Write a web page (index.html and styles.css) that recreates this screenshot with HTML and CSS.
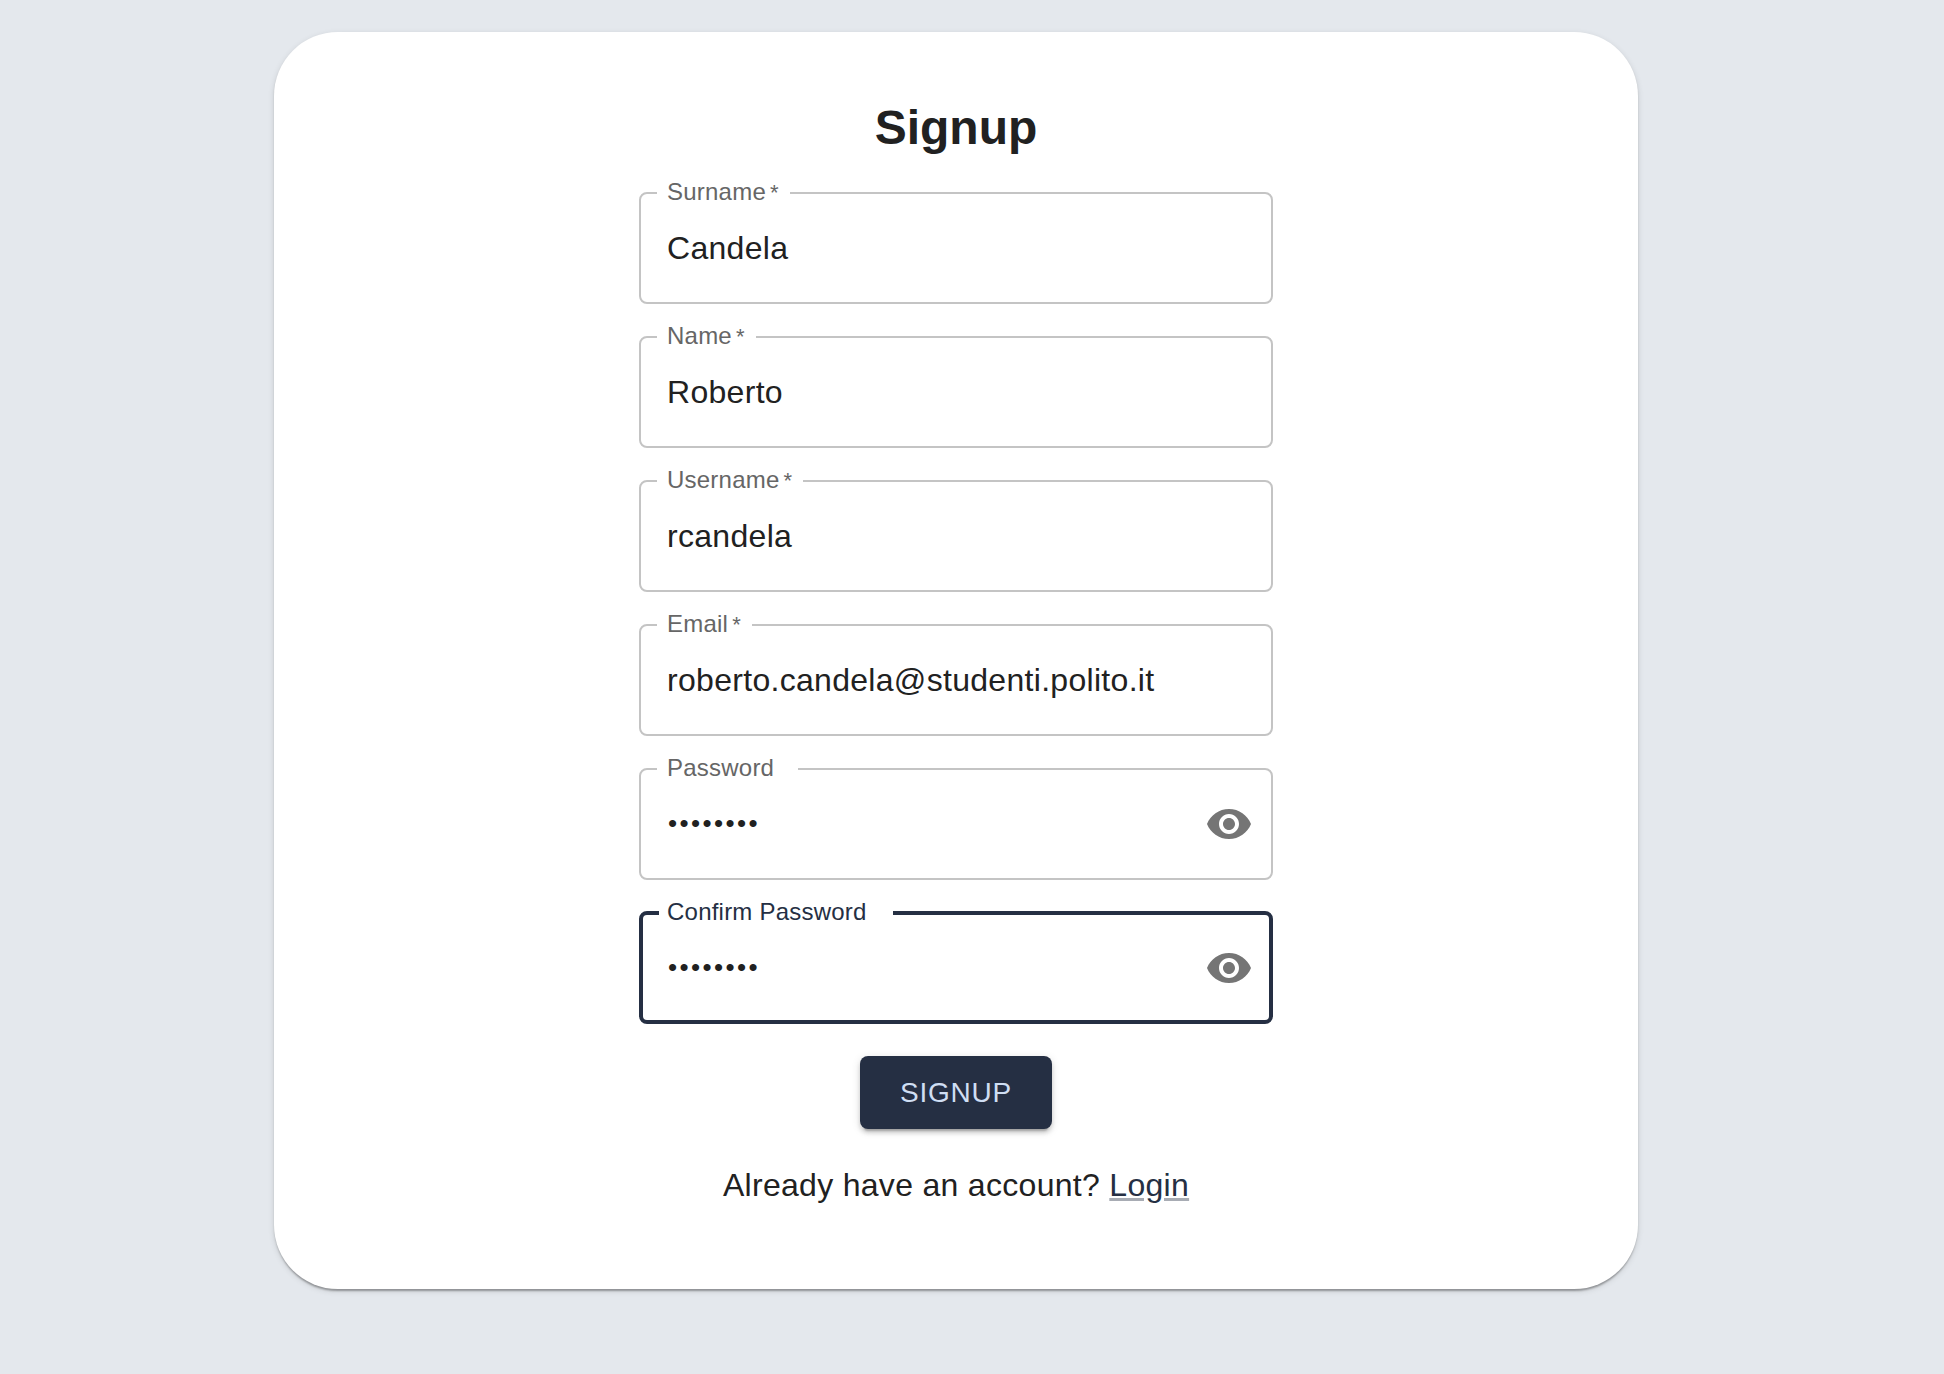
FILE: index.html
```html
<!DOCTYPE html>
<html lang="en">
<head>
<meta charset="utf-8">
<title>Signup</title>
<link rel="stylesheet" href="styles.css">
</head>
<body>
<main class="card">
  <h1 class="title">Signup</h1>
  <form class="form">
    <fieldset class="field field-surname">
      <legend class="label">Surname<span class="star">*</span></legend>
      <input class="input" type="text" value="Candela" aria-label="Surname">
    </fieldset>
    <fieldset class="field field-name">
      <legend class="label">Name<span class="star">*</span></legend>
      <input class="input" type="text" value="Roberto" aria-label="Name">
    </fieldset>
    <fieldset class="field field-username">
      <legend class="label">Username<span class="star">*</span></legend>
      <input class="input" type="text" value="rcandela" aria-label="Username">
    </fieldset>
    <fieldset class="field field-email">
      <legend class="label">Email<span class="star">*</span></legend>
      <input class="input" type="text" value="roberto.candela@studenti.polito.it" aria-label="Email">
    </fieldset>
    <fieldset class="field field-password">
      <legend class="label">Password</legend>
      <div class="row">
        <input class="input secret" type="password" value="password" aria-label="Password">
        <svg class="eye" viewBox="0 0 24 24"><path d="M12 4.5C7 4.5 2.73 7.61 1 12c1.73 4.39 6 7.5 11 7.5s9.27-3.11 11-7.5c-1.73-4.39-6-7.5-11-7.5zM12 17c-2.76 0-5-2.24-5-5s2.24-5 5-5 5 2.24 5 5-2.24 5-5 5zm0-8c-1.66 0-3 1.34-3 3s1.34 3 3 3 3-1.34 3-3-1.34-3-3-3z"/></svg>
      </div>
    </fieldset>
    <fieldset class="field field-confirm focused">
      <legend class="label">Confirm Password</legend>
      <div class="row">
        <input class="input secret" type="password" value="password" aria-label="Confirm Password">
        <svg class="eye" viewBox="0 0 24 24"><path d="M12 4.5C7 4.5 2.73 7.61 1 12c1.73 4.39 6 7.5 11 7.5s9.27-3.11 11-7.5c-1.73-4.39-6-7.5-11-7.5zM12 17c-2.76 0-5-2.24-5-5s2.24-5 5-5 5 2.24 5 5-2.24 5-5 5zm0-8c-1.66 0-3 1.34-3 3s1.34 3 3 3 3-1.34 3-3-1.34-3-3-3z"/></svg>
      </div>
    </fieldset>
  </form>
  <button class="submit" type="button">SIGNUP</button>
  <p class="login">Already have an account? <a class="link" href="#">Login</a></p>
</main>
</body>
</html>
```
FILE: styles.css
```css
* { box-sizing: border-box; }

body {
  margin: 0;
  min-height: 1374px;
  padding: 32px 32px 0 0;
  display: flex;
  justify-content: center;
  align-items: flex-start;
  background: #e4e8ed;
  color: #212121;
  font-family: "Liberation Sans", Arial, sans-serif;
}

.card {
  width: 1364px;
  height: 1257px;
  padding-top: 64px;
  display: flex;
  flex-direction: column;
  align-items: center;
  background: #fff;
  border-radius: 64px;
  box-shadow: 0 4px 2px -2px rgba(0, 0, 0, .2), 0 2px 2px 0 rgba(0, 0, 0, .14), 0 2px 6px 0 rgba(0, 0, 0, .12);
}

.title {
  margin: 0 0 21px;
  font-size: 48px;
  line-height: 64px;
}

.form {
  width: 634px;
  display: flex;
  flex-direction: column;
  gap: 21px;
}

/* The legend is 24px tall, so the box edge starts 11px below the fieldset top. */
.field {
  margin: 0;
  min-width: 0;
  height: 123px;
  padding: 0 18px 0 16px;
  border: 2px solid #c4c4c4;
  border-radius: 8px;
}

.label {
  height: 24px;
  padding: 0 0 2px 10px;
  color: #666;
  font-size: 24px;
  line-height: 22px;
  letter-spacing: .225px;
  white-space: nowrap;
}

.star {
  margin-left: 4px;
  font-size: 22px;
}

.field-surname .label { width: 133px; }
.field-name .label { width: 99px; }
.field-username .label { width: 146px; }
.field-email .label { width: 95px; }
.field-password .label { width: 141px; }
.field-confirm .label { width: 234px; padding-left: 8px; }

.field.focused {
  border: 4px solid #252f43;
  padding: 0 16px;
}

.focused .label { color: #252f43; }

.row {
  height: 86px;
  display: flex;
  align-items: center;
}

.input {
  display: block;
  width: 100%;
  height: 86px;
  padding: 0 0 0 10px;
  border: 0;
  outline: 0;
  background: transparent;
  color: #212121;
  font: 32px "Liberation Sans", Arial, sans-serif;
  letter-spacing: .3px;
}

.input.secret {
  padding: 0 0 2px 11px;
  font-size: 26px;
  letter-spacing: 2.4px;
}

.focused .input.secret { padding-left: 9px; }

.eye {
  flex: none;
  width: 48px;
  height: 48px;
  fill: #757575;
}

.submit {
  width: 192px;
  height: 73px;
  margin-top: 32px;
  padding: 0;
  border: 0;
  border-radius: 8px;
  background: #252f43;
  color: #cfdef3;
  font: 28px/49px "Liberation Sans", Arial, sans-serif;
  letter-spacing: .8px;
  box-shadow: 0 6px 2px -4px rgba(0, 0, 0, .2), 0 4px 4px 0 rgba(0, 0, 0, .14), 0 2px 10px 0 rgba(0, 0, 0, .12);
}

.login {
  margin: 32px 0 0;
  font-size: 32px;
  line-height: 48px;
  letter-spacing: .3px;
}

.link {
  color: #252f43;
  text-decoration: underline;
  text-decoration-color: rgba(37, 47, 67, .4);
}
```
